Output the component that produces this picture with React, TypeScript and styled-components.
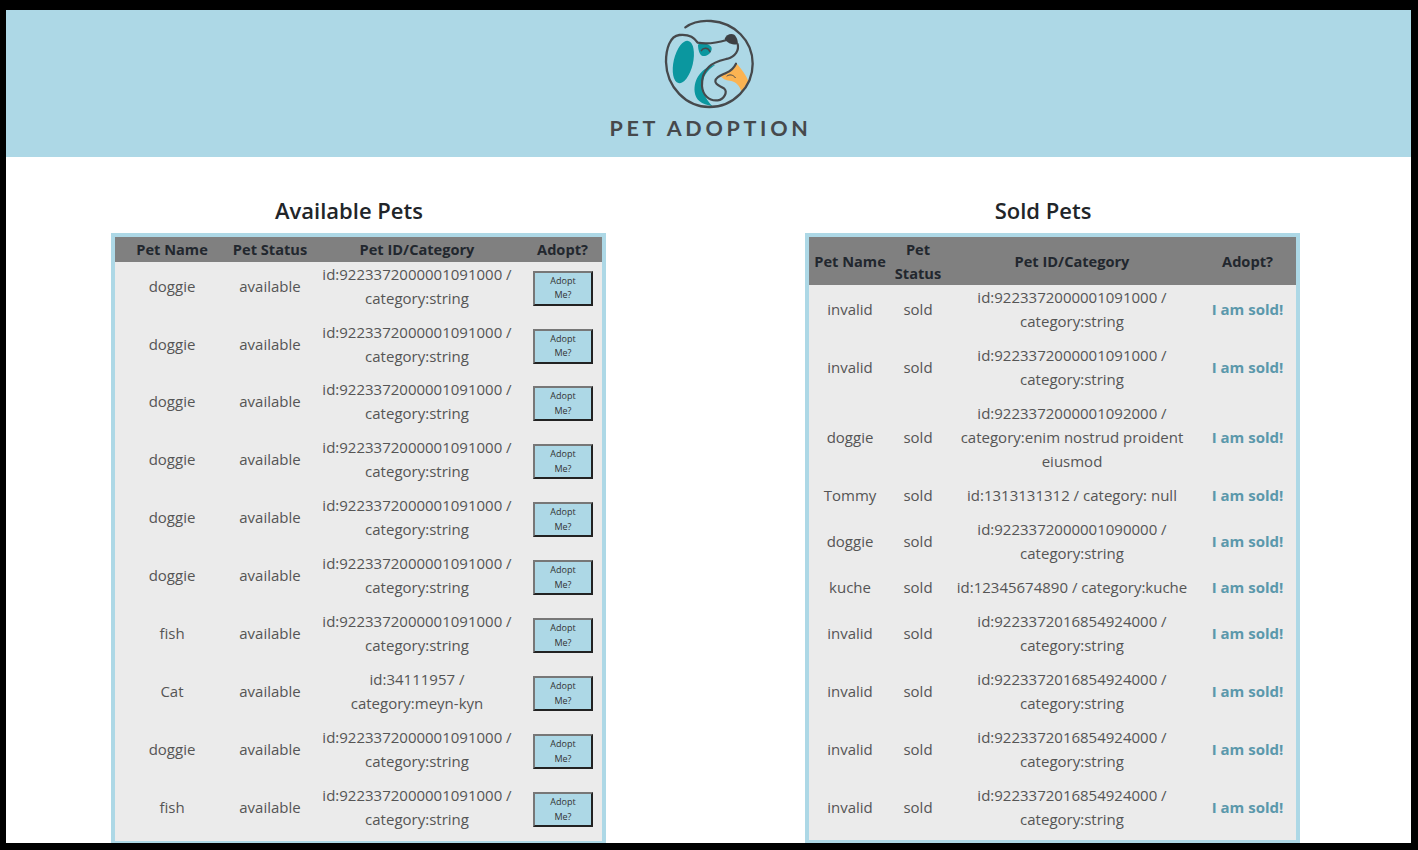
import React from "react";
import styled, { createGlobalStyle } from "styled-components";

const Global = createGlobalStyle`
  html, body { margin: 0; padding: 0; background: #000; }
  body { font-family: "Open Sans", "Noto Sans", sans-serif; }
`;

const Frame = styled.div`
  box-sizing: border-box;
  height: 100vh;
  padding: 10px 7px 7px 6px;
  background: #000;
  overflow: hidden;
`;
const Page = styled.main`
  height: 100%;
  background: #fff;
  overflow: hidden;
`;
const Header = styled.header`
  height: 147px;
  background: #add8e6;
  display: flex;
  flex-direction: column;
  align-items: center;
  padding-top: 2px;
  box-sizing: border-box;
`;
const Wordmark = styled.div`
  font-family: Lato, "Open Sans", sans-serif;
  font-weight: 700;
  font-size: 21.5px;
  line-height: 22px;
  letter-spacing: 3.7px;
  margin-top: 5px;
  margin-right: -4px;
  color: #46494c;
  white-space: nowrap;
`;
const Content = styled.div`
  display: flex;
  gap: 199px;
  padding: 39px 0 0 105px;
`;
const Section = styled.section`
  width: 495px;
  flex: none;
`;
const Title = styled.h2`
  margin: 0 19px 8px 0;
  height: 29px;
  font-size: 22px;
  line-height: 29px;
  font-weight: 600;
  color: #212529;
  text-align: center;
`;
const Table = styled.table`
  width: 495px;
  table-layout: fixed;
  border-collapse: separate;
  border-spacing: 0;
  border: 4px solid #add8e6;
  background: #ebebeb;
`;
const Col = styled.col<{ $w: number }>`
  width: ${(p) => p.$w}px;
`;
const Th = styled.th`
  background: #808080;
  color: #22272e;
  font-size: 14.6px;
  font-weight: 700;
  line-height: 23.5px;
  padding: 1.1px 0 0;
  text-align: center;
`;
const Td = styled.td`
  color: #555;
  font-size: 15px;
  line-height: 24px;
  padding: 0 6px 9.95px;
  text-align: center;
  vertical-align: middle;
`;
const AdoptButton = styled.button`
  display: block;
  box-sizing: border-box;
  width: 60px;
  height: 35px;
  margin: 5px auto 0 4px;
  padding: 0 10px;
  background: #add8e6;
  border: 2px solid;
  border-color: #777 #222 #222 #777;
  color: #333;
  font-family: inherit;
  font-size: 9px;
  line-height: 14.5px;
`;
const Sold = styled.span`
  color: #5b98ab;
  font-weight: 700;
  font-size: 15px;
`;

const Logo = () => (
  <svg width="105" height="100" viewBox="0 0 315 300" fill="none" style={{ flex: "none" }}>
    <ellipse cx="82" cy="150" rx="29" ry="65" transform="rotate(13 82 150)" fill="#0b979f" />
    <path d="M126 98 C136 92 162 94 167 108 C168 124 152 134 140 132 C130 128 126 112 126 98Z" fill="#0b979f" />
    <path d="M178 158 C138 166 112 200 116 240 C119 264 135 276 170 283 C152 266 142 245 140 225 C139 195 152 175 178 158Z" fill="#0b979f" />
    <path d="M194 192 C208 186 225 180 232 170 L241 153 C256 170 270 190 277 207 L257 240 C252 222 240 208 222 206 C208 206 199 200 194 192Z" fill="#fbb352" />
    <path d="M88 46 C110 30 140 25 165 27 C235 32 290 85 290 155 C290 225 232 285 160 285 C90 285 32 225 30 150 C30 110 42 72 70 69 C98 66 115 76 125 92 C150 97 185 92 212 84" stroke="#46494c" strokeWidth="7" strokeLinecap="round" strokeLinejoin="round" />
    <path d="M206 80 C210 68 225 62 235 68 C243 75 247 90 245 97 C232 99 212 94 206 80Z" fill="#3d4043" />
    <path d="M245 96 C250 115 238 133 215 140 C195 145 175 148 158 165 C142 180 137 200 138 222 C140 248 158 268 185 265 C205 262 215 240 205 230 C195 222 178 220 178 208 C178 195 195 190 210 183 C222 178 232 172 240 155" stroke="#46494c" strokeWidth="6.5" strokeLinecap="round" strokeLinejoin="round" />
    <path d="M136 116 C142 106 156 106 162 119" stroke="#46494c" strokeWidth="4.5" strokeLinecap="round" />
    <path d="M213 192 C220 186 232 188 238 197" stroke="#46494c" strokeWidth="3" strokeLinecap="round" />
  </svg>
);

const LONG = "id:9223372000001091000 / category:string";
const LATE = "id:9223372016854924000 / category:string";

const available: [string, string][] = [
  ["doggie", LONG], ["doggie", LONG], ["doggie", LONG], ["doggie", LONG], ["doggie", LONG],
  ["doggie", LONG], ["fish", LONG], ["Cat", "id:34111957 / category:meyn-kyn"], ["doggie", LONG], ["fish", LONG],
];
const sold: [string, string][] = [
  ["invalid", LONG], ["invalid", LONG],
  ["doggie", "id:9223372000001092000 / category:enim nostrud proident eiusmod"],
  ["Tommy", "id:1313131312 / category: null"],
  ["doggie", "id:9223372000001090000 / category:string"],
  ["kuche", "id:12345674890 / category:kuche"],
  ["invalid", LATE], ["invalid", LATE], ["invalid", LATE], ["invalid", LATE],
];

const Head = ({ widths }: { widths: number[] }) => (
  <>
    <colgroup>{widths.map((w, i) => <Col key={i} $w={w} />)}</colgroup>
    <thead>
      <tr>
        <Th>Pet Name</Th>
        <Th>Pet Status</Th>
        <Th>Pet ID/Category</Th>
        <Th>Adopt?</Th>
      </tr>
    </thead>
  </>
);

export default function App() {
  return (
    <Frame>
      <Global />
      <Page>
        <Header>
          <Logo />
          <Wordmark>PET ADOPTION</Wordmark>
        </Header>
        <Content>
          <Section>
            <Title>Available Pets</Title>
            <Table>
              <Head widths={[114, 82, 212, 79]} />
              <tbody>
                {available.map(([n, c], i) => (
                  <tr key={i}>
                    <Td>{n}</Td>
                    <Td>available</Td>
                    <Td>{c}</Td>
                    <Td><AdoptButton>Adopt Me?</AdoptButton></Td>
                  </tr>
                ))}
              </tbody>
            </Table>
          </Section>
          <Section>
            <Title>Sold Pets</Title>
            <Table>
              <Head widths={[82, 54, 254, 97]} />
              <tbody>
                {sold.map(([n, c], i) => (
                  <tr key={i}>
                    <Td>{n}</Td>
                    <Td>sold</Td>
                    <Td>{c}</Td>
                    <Td><Sold>I am sold!</Sold></Td>
                  </tr>
                ))}
              </tbody>
            </Table>
          </Section>
        </Content>
      </Page>
    </Frame>
  );
}
